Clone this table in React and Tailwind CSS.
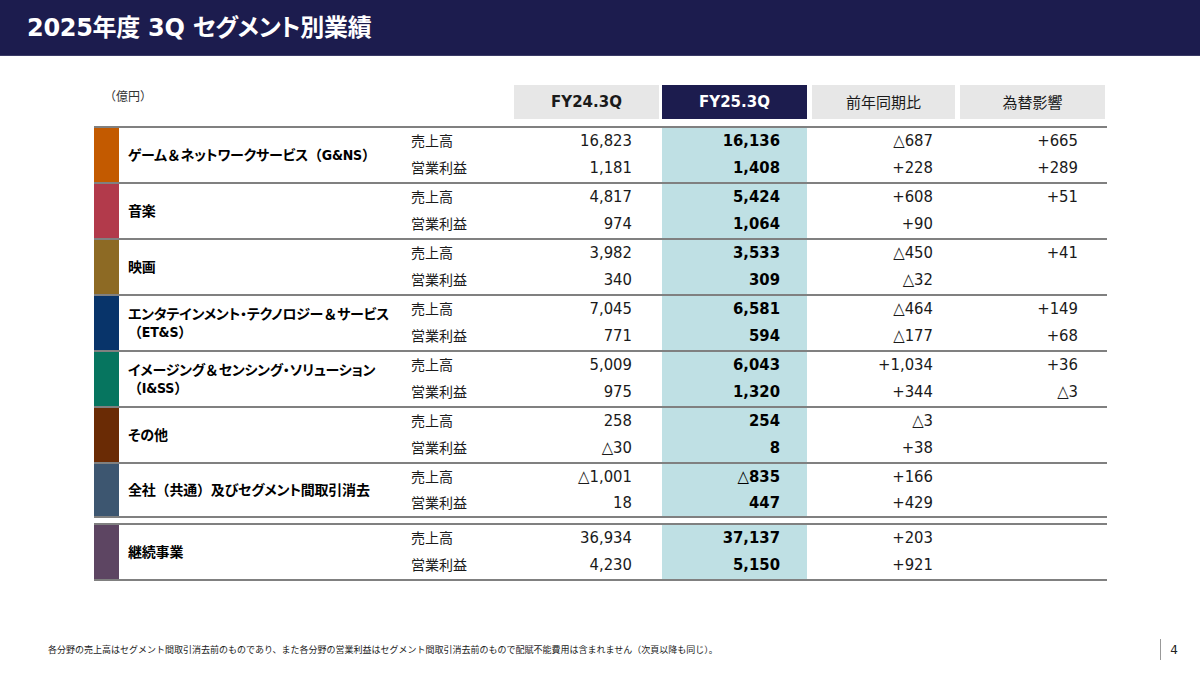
import React from 'react';

// セグメントデータ（単位：億円）
const SEGMENTS = [
    {
        color: 'bg-[#c35a00]',
        name: ['ゲーム＆ネットワークサービス（G&NS）'],
        rows: [
            ['16,823', '16,136', '△687', '+665'],
            ['1,181', '1,408', '+228', '+289'],
        ],
    },
    {
        color: 'bg-[#b23a4b]',
        name: ['音楽'],
        rows: [
            ['4,817', '5,424', '+608', '+51'],
            ['974', '1,064', '+90', ''],
        ],
    },
    {
        color: 'bg-[#8d6a24]',
        name: ['映画'],
        rows: [
            ['3,982', '3,533', '△450', '+41'],
            ['340', '309', '△32', ''],
        ],
    },
    {
        color: 'bg-[#08346a]',
        name: ['エンタテインメント・テクノロジー＆サービス', '（ET&S）'],
        rows: [
            ['7,045', '6,581', '△464', '+149'],
            ['771', '594', '△177', '+68'],
        ],
    },
    {
        color: 'bg-[#06755f]',
        name: ['イメージング＆センシング・ソリューション', '（I&SS）'],
        rows: [
            ['5,009', '6,043', '+1,034', '+36'],
            ['975', '1,320', '+344', '△3'],
        ],
    },
    {
        color: 'bg-[#6a2b05]',
        name: ['その他'],
        rows: [
            ['258', '254', '△3', ''],
            ['△30', '8', '+38', ''],
        ],
    },
    {
        color: 'bg-[#3d5670]',
        name: ['全社（共通）及びセグメント間取引消去'],
        rows: [
            ['△1,001', '△835', '+166', ''],
            ['18', '447', '+429', ''],
        ],
    },
];

const TOTAL = {
    color: 'bg-[#5d4562]',
    name: ['継続事業'],
    rows: [
        ['36,934', '37,137', '+203', ''],
        ['4,230', '5,150', '+921', ''],
    ],
};

const SUB_LABELS = ['売上高', '営業利益'];

// 全角の括弧と＆だけは詰めずに全角幅のまま表示
const NameLine = ({ text }) => (
    <div>
        {text.split(/([（）＆])/).map((part, i) =>
            /^[（）＆]$/.test(part)
                ? <span key={i} className="[font-feature-settings:normal]">{part}</span>
                : <span key={i}>{part}</span>
        )}
    </div>
);

const SegmentGroup = ({ seg, last, tall }) => (
    <div className={`flex ${tall ? 'h-[58px]' : 'h-[56px]'} border-t-2 border-[#808080] ${last ? 'border-b-2' : ''}`}>
        {/* 色帯 */}
        <div className={`w-[25px] ${seg.color}`} />

        {/* セグメント名 */}
        <div className="w-[286px] pl-[9px] flex flex-col justify-center text-[14px] leading-[18px] font-bold text-black tracking-[-0.2px] [font-feature-settings:'palt']">
            {seg.name.map((line, i) => (
                <NameLine key={i} text={line} />
            ))}
        </div>

        {/* 売上高 / 営業利益 */}
        <div className="flex flex-col">
            {seg.rows.map((r, i) => (
                <div key={i} className="flex flex-1 items-center">
                    <div className="w-[109px] pl-[6px] text-[14px] text-[#1a1a1a]">{SUB_LABELS[i]}</div>
                    <div className="w-[148px] h-full pr-[30px] flex items-center justify-end text-[16.5px] text-[#1a1a1a]">{r[0]}</div>
                    <div className="w-[145px] h-full pr-[27px] flex items-center justify-end bg-[#bfe0e4] text-[16.5px] font-bold text-black">{r[1]}</div>
                    <div className="w-[148px] h-full pr-[22px] flex items-center justify-end text-[16.5px] text-[#1a1a1a]">{r[2]}</div>
                    <div className="w-[152px] h-full pr-[29px] flex items-center justify-end text-[16.5px] text-[#1a1a1a]">{r[3]}</div>
                </div>
            ))}
        </div>
    </div>
);

const App = () => {
    return (
        <div className="w-[1200px] h-[674px] bg-white flex flex-col overflow-hidden font-['DejaVu_Sans_Condensed','DejaVu_Sans','Noto_Sans_CJK_JP',sans-serif]">
            {/* タイトルバー */}
            <div className="h-[56px] shrink-0 bg-[#1c1c4e] border-b border-[#3a3a66] flex items-center pl-[27px]">
                <h1 className="text-white text-[24px] font-bold tracking-[-0.3px] font-['DejaVu_Sans','Noto_Sans_CJK_JP',sans-serif] [font-feature-settings:'palt']">2025年度 3Q セグメント別業績</h1>
            </div>

            {/* 表 */}
            <div className="pl-[94px] w-[1107px] box-content">
                {/* 列見出し */}
                <div className="flex mt-[29px] h-[34px]">
                    <div className="w-[420px] pl-[10px] pt-[2px] text-[12px] text-[#333] font-['Noto_Sans_CJK_JP',sans-serif]">（億円）</div>
                    <div className="w-[145px] bg-[#e7e7e7] flex items-center justify-center text-[15px] font-bold text-[#1a1a1a] font-['DejaVu_Sans',sans-serif]">FY24.3Q</div>
                    <div className="w-[145px] ml-[3px] bg-[#1c1c4e] flex items-center justify-center text-[15px] font-bold text-white font-['DejaVu_Sans',sans-serif]">FY25.3Q</div>
                    <div className="w-[143px] ml-[5px] bg-[#e7e7e7] flex items-center justify-center text-[15px] text-[#1a1a1a] font-['Noto_Sans_CJK_JP',sans-serif]">前年同期比</div>
                    <div className="w-[145px] ml-[5px] bg-[#e7e7e7] flex items-center justify-center text-[15px] text-[#1a1a1a] font-['Noto_Sans_CJK_JP',sans-serif]">為替影響</div>
                </div>

                <div className="mt-[7px] w-[1013px]">
                    {SEGMENTS.map((seg, i) => (
                        <SegmentGroup key={i} seg={seg} last={i === SEGMENTS.length - 1} />
                    ))}
                    <div className="mt-[5px]">
                        <SegmentGroup seg={TOTAL} last tall />
                    </div>
                </div>
            </div>

            {/* 注記・ページ番号 */}
            <div className="mt-auto mb-[14px] flex items-center pl-[48px] pr-[22px]">
                <p className="flex-1 text-[9px] text-[#222] font-['Noto_Sans_CJK_JP',sans-serif]">
                    各分野の売上高はセグメント間取引消去前のものであり、また各分野の営業利益はセグメント間取引消去前のもので配賦不能費用は含まれません（次頁以降も同じ）。
                </p>
                <div className="border-l border-[#999] h-[21px] pl-[9px] flex items-center text-[12px] text-[#222] font-['DejaVu_Sans',sans-serif]">4</div>
            </div>
        </div>
    );
};

export default App;
